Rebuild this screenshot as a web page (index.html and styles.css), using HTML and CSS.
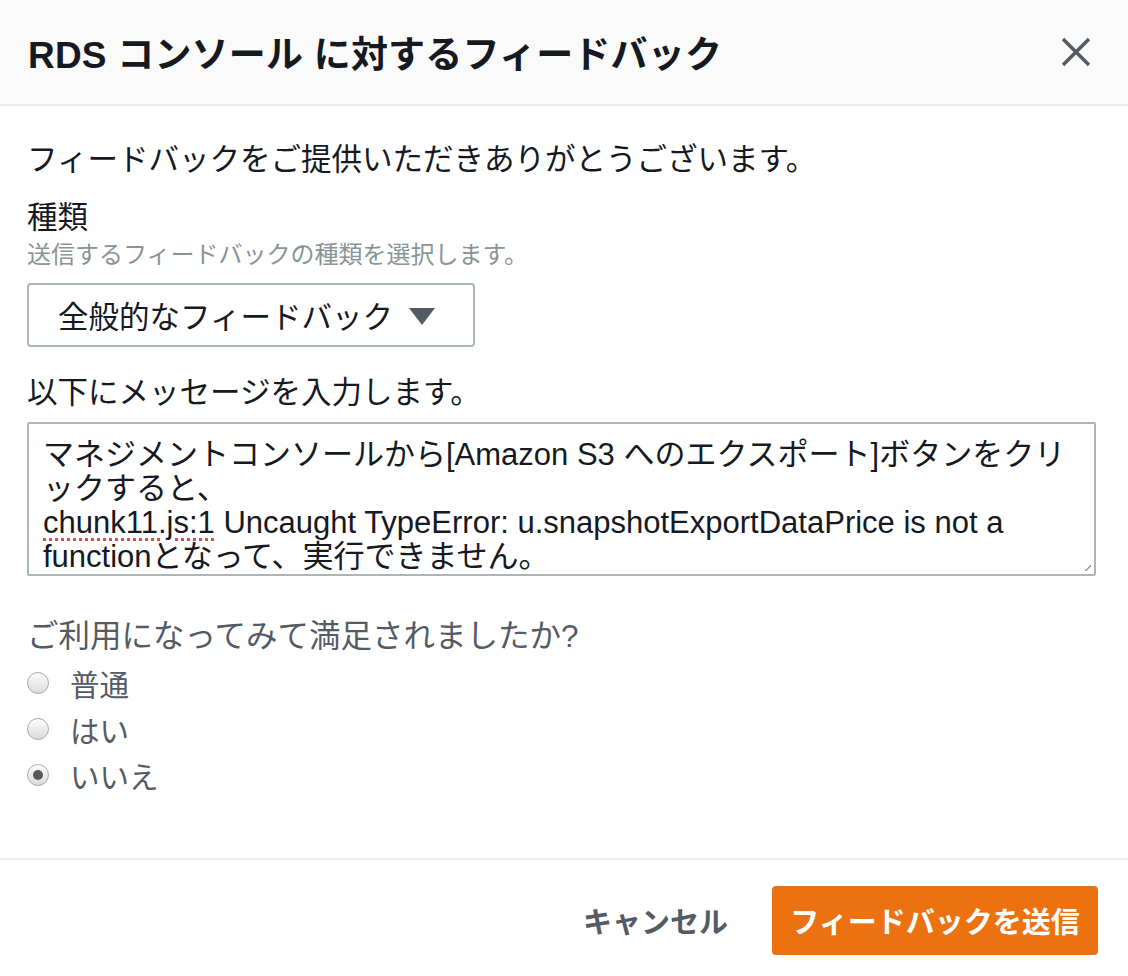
FILE: index.html
```html
<!DOCTYPE html>
<html lang="ja">
<head>
    <meta charset="UTF-8">
    <meta name="viewport" content="width=device-width, initial-scale=1.0">
    <title>RDS コンソール に対するフィードバック</title>
    <link rel="stylesheet" href="styles.css">
</head>
<body>
    <div class="modal">
        <div class="modal-header">
            <h1>RDS コンソール に対するフィードバック</h1>
            <button class="close" aria-label="閉じる">
                <svg width="32" height="32" viewBox="0 0 32 32">
                    <path d="M3 3 L29 29 M29 3 L3 29" stroke="#545b64" stroke-width="3.5" fill="none"/>
                </svg>
            </button>
        </div>

        <div class="modal-body">
            <p class="thanks">フィードバックをご提供いただきありがとうございます。</p>

            <div class="label">種類</div>
            <div class="hint">送信するフィードバックの種類を選択します。</div>
            <div class="select">
                <span>全般的なフィードバック</span>
                <svg width="26" height="20" viewBox="0 0 26 20"><path d="M0 2 H26 L13 19 Z" fill="#545b64"/></svg>
            </div>

            <div class="label msg-label">以下にメッセージを入力します。</div>
            <div class="textarea">マネジメントコンソールから[Amazon S3 へのエクスポート]ボタンをクリックすると、<br><span class="typo">chunk11.js:1</span> Uncaught TypeError: u.snapshotExportDataPrice is not a functionとなって、実行できません。<span class="grip"></span></div>

            <div class="label question">ご利用になってみて満足されましたか?</div>
            <div class="radios">
                <label class="radio"><span class="dot"></span>普通</label>
                <label class="radio"><span class="dot"></span>はい</label>
                <label class="radio"><span class="dot checked"></span>いいえ</label>
            </div>
        </div>

        <div class="modal-footer">
            <button class="cancel">キャンセル</button>
            <button class="submit">フィードバックを送信</button>
        </div>
    </div>
</body>
</html>
```

FILE: styles.css
```css
body {
    margin: 0;
    background-color: #ffffff;
    font-family: "Liberation Sans", "Noto Sans CJK JP", sans-serif;
    color: #16191f;
}

.modal {
    width: 1128px;
    height: 976px;
    display: flex;
    flex-direction: column;
}

.modal-header {
    background-color: #fafafa;
    border-bottom: 2px solid #eaeded;
    height: 104px;
    padding: 0 28px;
    display: flex;
    align-items: center;
    justify-content: space-between;
}

h1 {
    margin: 0;
    font-size: 37px;
    font-weight: bold;
    letter-spacing: 0.2px;
}

.close {
    background: none;
    border: none;
    padding: 0;
    margin-right: 8px;
    display: flex;
    cursor: pointer;
}

.modal-body {
    padding: 0 32px 0 27px;
    flex: 1;
}

.thanks {
    margin: 33px 0 0;
    font-size: 30.5px;
    line-height: 40px;
}

.label {
    font-size: 30.5px;
    line-height: 40px;
    margin-top: 18px;
}

.hint {
    font-size: 24px;
    line-height: 30px;
    color: #879596;
    margin-top: 3px;
}

.select {
    width: 448px;
    height: 64px;
    box-sizing: border-box;
    margin-top: 13px;
    border: 2px solid #aab7b8;
    border-radius: 4px;
    display: flex;
    align-items: center;
    padding-left: 29px;
    gap: 16px;
    font-size: 30.5px;
}

.select svg {
    margin-top: 2px;
}

.msg-label {
    margin-top: 25px;
}

.textarea {
    position: relative;
    margin-top: 10px;
    height: 154px;
    box-sizing: border-box;
    border: 2px solid #aab7b8;
    border-radius: 2px;
    padding: 14px 17px 0 14px;
    font-size: 31px;
    line-height: 34px;
    overflow: hidden;
}

.typo {
    text-decoration: underline dotted #e0484e;
    text-decoration-thickness: 3px;
    text-underline-offset: 5px;
}

.grip {
    position: absolute;
    right: 3px;
    bottom: 3px;
    width: 6px;
    height: 6px;
    background: linear-gradient(135deg, transparent 45%, #999 45%, #999 60%, transparent 60%);
}

.question {
    margin-top: 40px;
    font-size: 31.5px;
    color: #545b64;
}

.radios {
    margin-top: 4px;
}

.radio {
    display: flex;
    align-items: center;
    height: 46px;
    font-size: 29.5px;
    color: #545b64;
    gap: 21px;
}

.dot {
    width: 22px;
    height: 22px;
    box-sizing: border-box;
    border-radius: 50%;
    border: 1px solid #a9a9a9;
    background: linear-gradient(#fbfbfb, #dcdcdc);
    box-shadow: inset 0 1px 1px rgba(255, 255, 255, 0.8);
    position: relative;
}

.dot.checked::after {
    content: "";
    position: absolute;
    left: 5px;
    top: 5px;
    width: 10px;
    height: 10px;
    border-radius: 50%;
    background-color: #5a5a5a;
}

.modal-footer {
    border-top: 2px solid #eaeded;
    height: 116px;
    display: flex;
    align-items: center;
    justify-content: flex-end;
    padding: 0 30px 0 0;
    gap: 44px;
}

button {
    font-family: "Liberation Sans", "Noto Sans CJK JP", sans-serif;
}

.cancel {
    background: none;
    border: none;
    font-size: 29px;
    font-weight: bold;
    color: #545b64;
    padding: 0;
    margin-top: 4px;
}

.submit {
    background-color: #ec7211;
    color: #ffffff;
    border: none;
    border-radius: 4px;
    width: 326px;
    height: 69px;
    font-size: 29px;
    font-weight: bold;
    margin-top: 4px;
}
```
